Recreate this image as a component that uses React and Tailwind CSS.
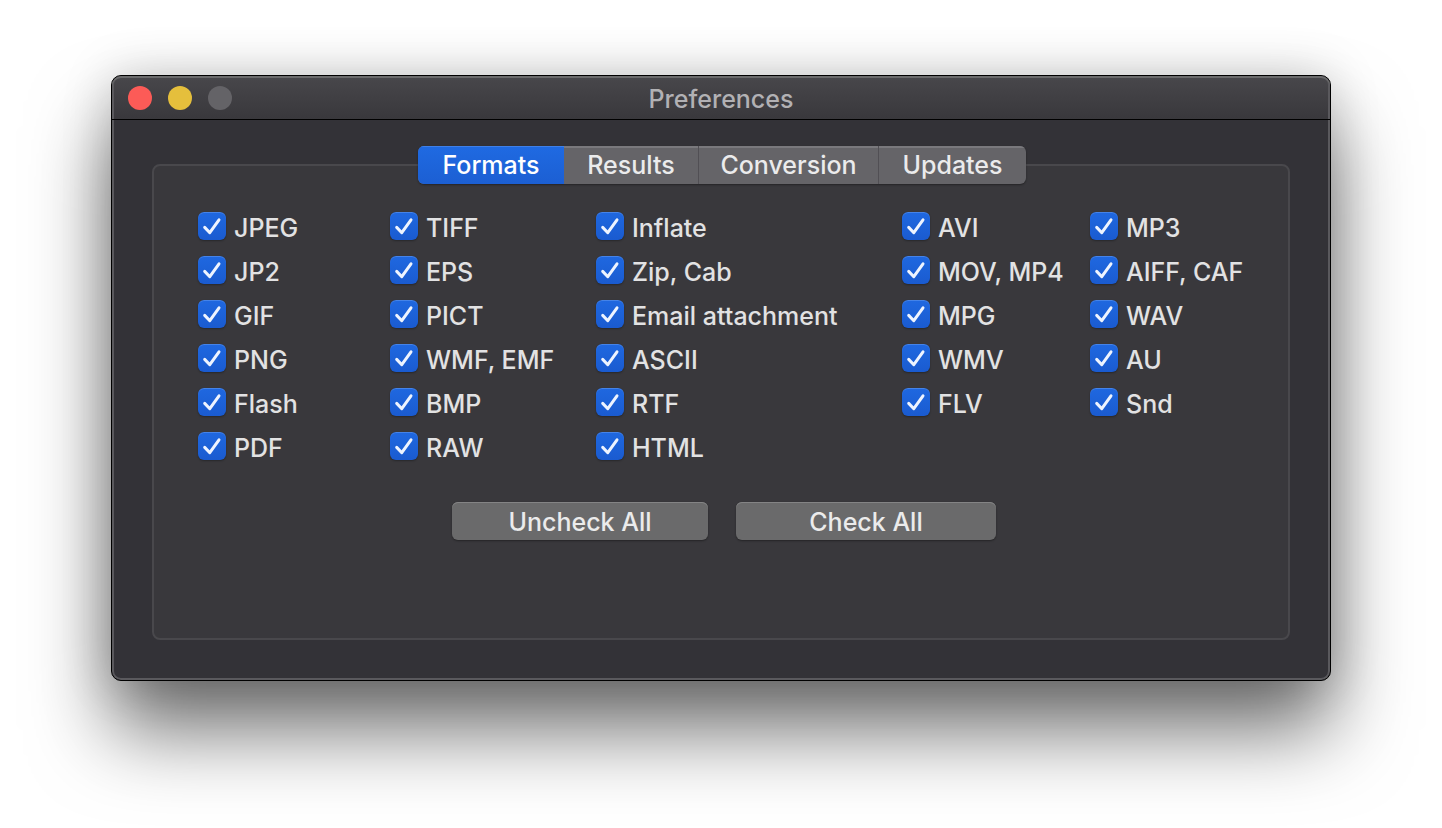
import { useState } from "react";

const tabs = [
  { name: "Formats", width: "w-[146px]" },
  { name: "Results", width: "w-[135px]" },
  { name: "Conversion", width: "w-[180px]" },
  { name: "Updates", width: "w-[147px]" },
];

const columns = [
  ["JPEG", "JP2", "GIF", "PNG", "Flash", "PDF"],
  ["TIFF", "EPS", "PICT", "WMF, EMF", "BMP", "RAW"],
  ["Inflate", "Zip, Cab", "Email attachment", "ASCII", "RTF", "HTML"],
  ["AVI", "MOV, MP4", "MPG", "WMV", "FLV"],
  ["MP3", "AIFF, CAF", "WAV", "AU", "Snd"],
];

const allFormats = columns.flat();

function FormatCheckbox({ label, checked, onChange }) {
  return (
    <label className="flex h-11 items-center gap-2 whitespace-nowrap">
      <span className="grid size-7 shrink-0">
        <input
          type="checkbox"
          checked={checked}
          onChange={onChange}
          className="peer col-start-1 row-start-1 size-7 appearance-none rounded-md bg-[#6a696d] shadow-[inset_0_1px_0_#7f7e82,0_1px_2px_#00000050] checked:bg-linear-to-b checked:from-[#1f68e0] checked:to-[#1a5bd0] checked:shadow-[inset_0_1px_0_#4583e8,0_1px_2px_#00000050]"
        />
        <svg
          viewBox="0 0 28 28"
          className="pointer-events-none invisible col-start-1 row-start-1 size-7 peer-checked:visible"
          fill="none"
          stroke="#eef4ff"
          strokeWidth="3"
          strokeLinecap="round"
          strokeLinejoin="round"
          aria-hidden="true"
        >
          <path d="M6.7 15.4 11.8 20.7 21 7.8" />
        </svg>
      </span>
      <span className="pt-1">{label}</span>
    </label>
  );
}

function PushButton({ children, className, onClick }) {
  return (
    <button
      type="button"
      onClick={onClick}
      className={`h-[38px] rounded-md bg-[#6a6a6b] pt-0.5 text-[#ebebeb] shadow-[inset_0_1px_0_#848485,0_1px_2px_#00000060] ${className}`}
    >
      {children}
    </button>
  );
}

export default function App() {
  const [tab, setTab] = useState("Formats");
  const [checked, setChecked] = useState(() => new Set(allFormats));

  const toggle = (name) => {
    const next = new Set(checked);
    if (next.has(name)) next.delete(name);
    else next.add(name);
    setChecked(next);
  };

  return (
    <div className="min-h-screen bg-white px-[111px] pt-[75px] font-['Inter',sans-serif] text-[25px] leading-8 font-[450] text-[#e2e2e3]">
      <main className="overflow-hidden rounded-[10px] border border-black bg-[#333237] shadow-[0_50px_80px_rgba(0,0,0,0.56),0_0_50px_rgba(0,0,0,0.18)]">
        <div className="rounded-[9px] shadow-[inset_0_0_0_2px_#5a595d]">
          <header className="grid h-11 grid-cols-[1fr_auto_1fr] items-center rounded-t-[9px] border-b border-black bg-linear-to-b from-[#48474b] to-[#39383c] px-4 shadow-[inset_0_2px_0_#6b6b6c,inset_2px_0_0_#5a595d,inset_-2px_0_0_#5a595d]">
            <div className="flex gap-4">
              <button type="button" aria-label="Close" className="size-6 rounded-full bg-[#fc5b57]" />
              <button type="button" aria-label="Minimize" className="size-6 rounded-full bg-[#e5bf3c]" />
              <button type="button" aria-label="Zoom" disabled className="size-6 rounded-full bg-[#646367]" />
            </div>
            <h1 className="pt-0.5 text-[#b2b1b4]">Preferences</h1>
          </header>

          <div className="px-10 pt-11 pb-10">
            <section className="rounded-lg border-2 border-[#49484c] bg-[#39383c] pb-[98px] pl-0.5">
              <div className="-mt-5 flex justify-center">
                <div
                  role="tablist"
                  className="flex h-[38px] overflow-hidden rounded-md bg-[#656468] shadow-[0_1px_2px_#00000060]"
                >
                  {tabs.map(({ name, width }) => (
                    <button
                      key={name}
                      type="button"
                      role="tab"
                      aria-selected={tab === name}
                      onClick={() => setTab(name)}
                      className={`border-r border-[#514f54] text-[#ebebec] shadow-[inset_0_2px_0_#7a797d] last:border-r-0 aria-selected:border-r-0 aria-selected:bg-linear-to-b aria-selected:from-[#1f6ae2] aria-selected:to-[#1c5fd3] aria-selected:text-white aria-selected:shadow-[inset_0_1px_0_#3f80e8] ${width}`}
                    >
                      {name}
                    </button>
                  ))}
                </div>
              </div>

              <div className="mt-5 grid grid-cols-[192px_206px_306px_188px_156px] justify-center">
                {columns.map((column) => (
                  <div key={column[0]}>
                    {column.map((name) => (
                      <FormatCheckbox
                        key={name}
                        label={name}
                        checked={checked.has(name)}
                        onChange={() => toggle(name)}
                      />
                    ))}
                  </div>
                ))}
              </div>

              <div className="mt-[34px] flex justify-center gap-7 pl-1">
                <PushButton className="w-64" onClick={() => setChecked(new Set())}>
                  Uncheck All
                </PushButton>
                <PushButton className="w-[260px]" onClick={() => setChecked(new Set(allFormats))}>
                  Check All
                </PushButton>
              </div>
            </section>
          </div>
        </div>
      </main>
    </div>
  );
}
